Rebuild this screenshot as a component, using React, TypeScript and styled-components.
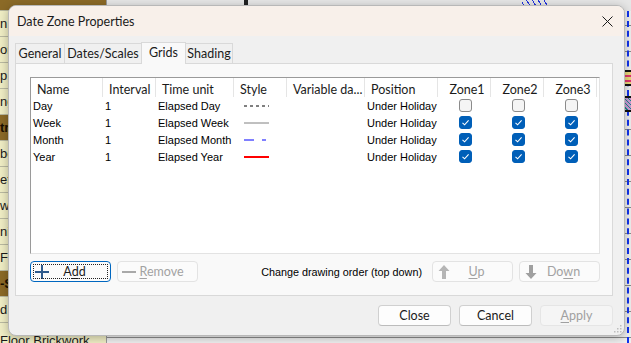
import React from "react";
import styled, { createGlobalStyle, css } from "styled-components";

const GlobalStyle = createGlobalStyle`
  html, body { margin: 0; padding: 0; }
  body { width: 631px; height: 343px; overflow: hidden; background: #e8e8e8; }
  * { box-sizing: border-box; }
`;

const UI = `Lato, "Noto Sans", sans-serif`;
const CLASSIC = `"Liberation Sans", Arial, sans-serif`;

/* ---------- background application ---------- */
const Desktop = styled.div`
  position: relative;
  width: 631px;
  height: 343px;
  overflow: hidden;
  display: flex;
  font-family: ${CLASSIC};
`;

const NameColumn = styled.div`
  width: 107px;
  display: flex;
  flex-direction: column;
  border-right: 1px solid #9a9a9a;
`;

const NameCell = styled.div<{ $dark?: boolean; $h?: number }>`
  height: ${(p) => p.$h ?? 26}px;
  flex: none;
  display: flex;
  align-items: center;
  padding-left: 0;
  font-size: 13px;
  white-space: nowrap;
  overflow: hidden;
  border-bottom: 1px solid #b9b9a0;
  background: ${(p) => (p.$dark ? "#8b6a27" : "#efedc4")};
  color: ${(p) => (p.$dark ? "#1a1000" : "#1a1a1a")};
  font-weight: ${(p) => (p.$dark ? 700 : 400)};
`;

const Chart = styled.div`
  flex: 1;
  display: flex;
  flex-direction: column;
  background:
    repeating-linear-gradient(to bottom, transparent 0 25px, #8c8c8c 25px 26px),
    #efefef;
`;

const ChartTop = styled.div`
  height: 11px;
  display: flex;
  background: #e6e6e6;
`;

const DottedSpan = styled.div`
  width: 137px;
  border-bottom: 1px dotted #666;
`;

const Marker = styled.div`
  width: 4px;
  background: #222;
`;

const Hatch = styled.div`
  width: 26px;
  margin-left: 274px;
  background: repeating-linear-gradient(60deg, transparent 0 4px, #2233dd 4px 5px);
`;

const ChartRest = styled.div`
  flex: 1;
  position: relative;
`;

const DashedLine = styled.div`
  position: absolute;
  right: 2px;
  top: 0;
  bottom: 0;
  border-left: 2px dashed #1133ee;
`;

const GanttBar = styled.div<{ $top: number; $kind: "brick" | "net" }>`
  position: absolute;
  right: 0;
  width: 7px;
  top: ${(p) => p.$top}px;
  height: 16px;
  border-top: 2px solid #111;
  border-bottom: 2px solid #111;
  background: ${(p) =>
    p.$kind === "brick"
      ? "repeating-linear-gradient(to bottom, #e8d67a 0 3px, #e2366e 3px 5px)"
      : "repeating-linear-gradient(45deg, #c99ad6 0 2px, #1f8a8a 2px 3px)"};
`;

/* ---------- dialog ---------- */
const Dialog = styled.div`
  position: absolute;
  left: 8px;
  top: 5px;
  width: 617px;
  height: 331px;
  border-radius: 8px;
  border: 1px solid #b8b8b8;
  background: #f0f0f0;
  box-shadow: 0 2px 10px rgba(0, 0, 0, 0.28);
  overflow: hidden;
  display: flex;
  flex-direction: column;
  font-family: ${UI};
  color: #1b1b1b;
`;

const TitleBar = styled.div`
  height: 30px;
  flex: none;
  background: #f8f0ea;
  display: flex;
  align-items: center;
  justify-content: space-between;
  padding: 1px 10px 0 8px;
  font-size: 12.5px;
`;

const CloseGlyph = styled.svg`
  width: 11px;
  height: 11px;
  margin-right: 1px;
`;

const DialogBody = styled.div`
  flex: 1;
  display: flex;
  flex-direction: column;
  padding: 6px 11px 0 6px;
`;

const TabStrip = styled.div`
  display: flex;
  align-items: flex-end;
  height: 21px;
  position: relative;
  z-index: 1;
`;

const Tab = styled.div<{ $active?: boolean; $w: number }>`
  width: ${(p) => p.$w}px;
  height: ${(p) => (p.$active ? 22 : 20)}px;
  display: flex;
  align-items: center;
  justify-content: center;
  font-size: 12.5px;
  border: 1px solid #d9d9d9;
  border-bottom: none;
  margin-right: -1px;
  background: ${(p) => (p.$active ? "#f9f9f9" : "#f0f0f0")};
  ${(p) =>
    p.$active &&
    css`
      margin-bottom: -1px;
      padding-bottom: 3px;
    `}
`;

const Panel = styled.div`
  width: 598px;
  height: 233px;
  border: 1px solid #d9d9d9;
  background: #f9f9f9;
  display: flex;
  flex-direction: column;
  padding: 13px 0 0 14px;
`;

const ListView = styled.div`
  width: 570px;
  height: 177px;
  background: #ffffff;
  border-top: 1px solid #9a9a9a;
  border-left: 1px solid #9a9a9a;
  border-right: 1px solid #e3e3e3;
  border-bottom: 1px solid #e3e3e3;
  overflow: hidden;
`;

const HeaderRow = styled.div`
  display: flex;
  height: 19px;
`;

const HeadCell = styled.div<{ $w: number; $center?: boolean }>`
  width: ${(p) => p.$w}px;
  flex: none;
  display: flex;
  align-items: center;
  justify-content: ${(p) => (p.$center ? "center" : "flex-start")};
  padding: 4px 0 0 6px;
  font-size: 12.5px;
  color: #1b1b1b;
  border-right: 1px solid #e5e5e5;
  white-space: nowrap;
  overflow: hidden;
`;

const BodyRow = styled.div`
  display: flex;
  height: 17px;
`;

const Cell = styled.div<{ $w: number; $center?: boolean }>`
  width: ${(p) => p.$w}px;
  flex: none;
  display: flex;
  align-items: center;
  justify-content: ${(p) => (p.$center ? "center" : "flex-start")};
  padding-left: ${(p) => (p.$center ? 1 : 2)}px;
  font-family: ${CLASSIC};
  font-size: 11px;
  color: #000;
  white-space: nowrap;
  overflow: hidden;
`;

const StyleSample = styled.svg`
  display: block;
  width: 30px;
  height: 6px;
  margin-left: 8px;
`;

const Check = styled.span<{ $on?: boolean }>`
  display: flex;
  align-items: center;
  justify-content: center;
  width: 13px;
  height: 13px;
  border-radius: 3px;
  ${(p) =>
    p.$on
      ? css`
          background: #005fb8;
          border: 1px solid #005fb8;
        `
      : css`
          background: #f5f5f5;
          border: 1px solid #8b8b8b;
        `}
`;

const ActionRow = styled.div`
  display: flex;
  align-items: center;
  width: 570px;
  margin-top: 7px;
  height: 21px;
`;

const SmallButton = styled.button<{ $focused?: boolean }>`
  width: 81px;
  height: 21px;
  padding: 0 3px;
  display: flex;
  align-items: center;
  font-family: ${UI};
  font-size: 12.5px;
  border-radius: 4px;
  background: #fbfbfb;
  border: 1px solid #e3e3e3;
  color: #a2a2a2;
  position: relative;
  ${(p) =>
    p.$focused &&
    css`
      border: 1px solid #0067c0;
      color: #1b1b1b;
      &::after {
        content: "";
        position: absolute;
        inset: 2px;
        border: 1px dotted #222;
      }
    `}
`;

const BtnLabel = styled.span`
  flex: 1;
  text-align: center;
  padding-right: 8px;
`;

const IconBox = styled.svg`
  width: 16px;
  height: 16px;
  flex: none;
`;

const OrderLabel = styled.span`
  margin-left: auto;
  margin-right: 10px;
  font-family: ${CLASSIC};
  font-size: 10.8px;
  color: #000;
`;

const Gap = styled.div<{ $w: number }>`
  width: ${(p) => p.$w}px;
  flex: none;
`;

const Footer = styled.div`
  display: flex;
  justify-content: flex-end;
  gap: 8px;
  padding: 9px 0 0 0;
`;

const DialogButton = styled.button<{ $disabled?: boolean }>`
  width: 73px;
  height: 21px;
  font-family: ${UI};
  font-size: 12.5px;
  border-radius: 4px;
  padding: 0;
  ${(p) =>
    p.$disabled
      ? css`
          background: #f5f5f5;
          border: 1px solid #e5e5e5;
          color: #a0a0a0;
        `
      : css`
          background: #fdfdfd;
          border: 1px solid #d0d0d0;
          border-bottom-color: #bcbcbc;
          color: #1b1b1b;
        `}
`;

const Grip = styled.svg`
  position: absolute;
  right: 2px;
  bottom: 2px;
  width: 10px;
  height: 10px;
`;

const U = styled.span`
  text-decoration: underline;
  text-underline-offset: 2px;
`;

const columns = [
  { label: "Name", w: 72 },
  { label: "Interval", w: 53 },
  { label: "Time unit", w: 78 },
  { label: "Style", w: 53 },
  { label: "Variable da...", w: 78 },
  { label: "Position", w: 73 },
  { label: "Zone1", w: 53, center: true },
  { label: "Zone2", w: 53, center: true },
  { label: "Zone3", w: 53, center: true },
];

type Row = { name: string; unit: string; style: "dash" | "grey" | "blue" | "red"; zones: boolean };
const rows: Row[] = [
  { name: "Day", unit: "Elapsed Day", style: "dash", zones: false },
  { name: "Week", unit: "Elapsed Week", style: "grey", zones: true },
  { name: "Month", unit: "Elapsed Month", style: "blue", zones: true },
  { name: "Year", unit: "Elapsed Year", style: "red", zones: true },
];

function Sample({ kind }: { kind: Row["style"] }) {
  return (
    <StyleSample viewBox="0 0 30 6">
      {kind === "dash" && <line x1="0" y1="3" x2="25" y2="3" stroke="#000" strokeWidth="1" strokeDasharray="3 3" />}
      {kind === "grey" && <line x1="0" y1="3" x2="25" y2="3" stroke="#808080" strokeWidth="1" />}
      {kind === "blue" && <path d="M0 3H10M18 3H22" stroke="#0000ff" strokeWidth="1" fill="none" />}
      {kind === "red" && <line x1="0" y1="3" x2="25" y2="3" stroke="#ff0000" strokeWidth="2" />}
    </StyleSample>
  );
}

function CheckBox({ on }: { on: boolean }) {
  return (
    <Check $on={on}>
      {on && (
        <svg width="9" height="9" viewBox="0 0 9 9">
          <path d="M1.5 4.8L3.6 6.8L7.6 2.4" stroke="#fff" strokeWidth="1.1" fill="none" />
        </svg>
      )}
    </Check>
  );
}

const leftCells: { t: string; dark?: boolean; h?: number }[] = [
  { t: "", dark: true, h: 11 },
  { t: "n" },
  { t: "on" },
  { t: "p S" },
  { t: "ng" },
  { t: "tr", dark: true },
  { t: "bo" },
  { t: "et" },
  { t: "wo" },
  { t: "ni" },
  { t: "Fi" },
  { t: "-S", dark: true },
  { t: "d" },
  { t: "Floor Brickwork", h: 36 },
];

export default function App() {
  return (
    <>
      <GlobalStyle />
      <Desktop>
        <NameColumn>
          {leftCells.map((c, i) => (
            <NameCell key={i} $dark={c.dark} $h={c.h}>
              {c.t}
            </NameCell>
          ))}
        </NameColumn>
        <Chart>
          <ChartTop>
            <DottedSpan />
            <Marker />
            <Hatch />
          </ChartTop>
          <ChartRest>
            <DashedLine />
            <GanttBar $top={59} $kind="brick" />
            <GanttBar $top={85} $kind="net" />
          </ChartRest>
        </Chart>

        <Dialog>
          <TitleBar>
            <span>Date Zone Properties</span>
            <CloseGlyph viewBox="0 0 11 11">
              <path d="M0.5 0.5L10.5 10.5M10.5 0.5L0.5 10.5" stroke="#1b1b1b" strokeWidth="1" />
            </CloseGlyph>
          </TitleBar>
          <DialogBody>
            <TabStrip>
              <Tab $w={50}>General</Tab>
              <Tab $w={78}>Dates/Scales</Tab>
              <Tab $w={45} $active>
                Grids
              </Tab>
              <Tab $w={48}>Shading</Tab>
            </TabStrip>
            <Panel>
              <ListView>
                <HeaderRow>
                  {columns.map((c) => (
                    <HeadCell key={c.label} $w={c.w} $center={c.center}>
                      {c.label}
                    </HeadCell>
                  ))}
                </HeaderRow>
                {rows.map((r) => (
                  <BodyRow key={r.name}>
                    <Cell $w={72}>{r.name}</Cell>
                    <Cell $w={53}>1</Cell>
                    <Cell $w={78}>{r.unit}</Cell>
                    <Cell $w={53}>
                      <Sample kind={r.style} />
                    </Cell>
                    <Cell $w={78} />
                    <Cell $w={73}>Under Holiday</Cell>
                    <Cell $w={53} $center>
                      <CheckBox on={r.zones} />
                    </Cell>
                    <Cell $w={53} $center>
                      <CheckBox on={r.zones} />
                    </Cell>
                    <Cell $w={53} $center>
                      <CheckBox on={r.zones} />
                    </Cell>
                  </BodyRow>
                ))}
              </ListView>
              <ActionRow>
                <SmallButton $focused>
                  <IconBox viewBox="0 0 16 16">
                    <path d="M8 1V15M1 8H15" stroke="#2e5a8c" strokeWidth="2" />
                  </IconBox>
                  <BtnLabel>
                    A<U>d</U>d
                  </BtnLabel>
                </SmallButton>
                <Gap $w={6} />
                <SmallButton>
                  <IconBox viewBox="0 0 16 16">
                    <path d="M1 8H15" stroke="#a9a9a9" strokeWidth="2" />
                  </IconBox>
                  <BtnLabel>
                    <U>R</U>emove
                  </BtnLabel>
                </SmallButton>
                <OrderLabel>Change drawing order (top down)</OrderLabel>
                <SmallButton>
                  <IconBox viewBox="0 0 16 16">
                    <path d="M8 1L2.5 7H6V15H10V7H13.5Z" fill="#b5b5b5" />
                  </IconBox>
                  <BtnLabel>
                    <U>U</U>p
                  </BtnLabel>
                </SmallButton>
                <Gap $w={6} />
                <SmallButton>
                  <IconBox viewBox="0 0 16 16">
                    <path d="M8 15L2.5 9H6V1H10V9H13.5Z" fill="#a0a0a0" />
                  </IconBox>
                  <BtnLabel>
                    Do<U>w</U>n
                  </BtnLabel>
                </SmallButton>
              </ActionRow>
            </Panel>
            <Footer>
              <DialogButton>Close</DialogButton>
              <DialogButton>Cancel</DialogButton>
              <DialogButton $disabled>
                <U>A</U>pply
              </DialogButton>
            </Footer>
          </DialogBody>
          <Grip viewBox="0 0 10 10">
            {[
              [8, 2],
              [5, 5],
              [8, 5],
              [2, 8],
              [5, 8],
              [8, 8],
            ].map(([x, y], i) => (
              <rect key={i} x={x} y={y} width="1.5" height="1.5" fill="#bdbdbd" />
            ))}
          </Grip>
        </Dialog>
      </Desktop>
    </>
  );
}
